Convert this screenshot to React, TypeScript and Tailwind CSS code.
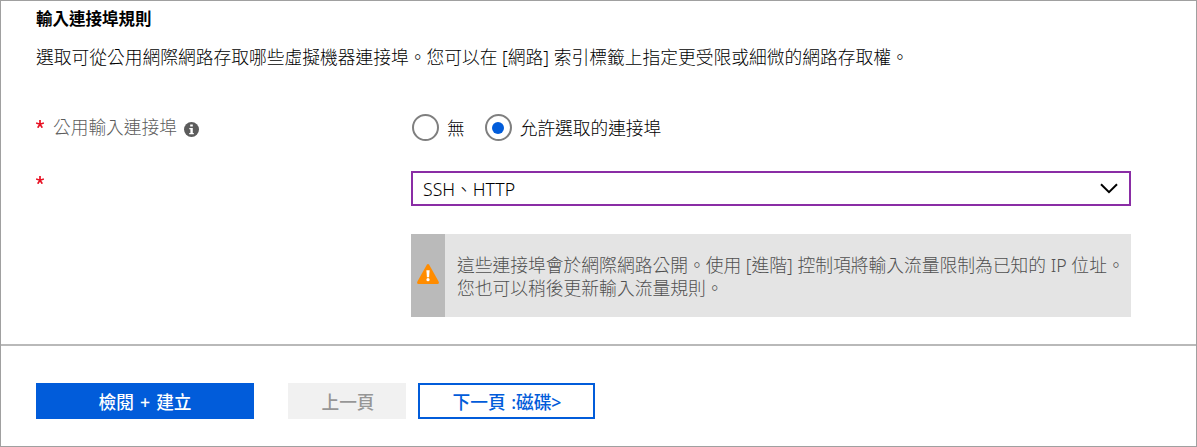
import React from "react";

function Required() {
  return (
    <svg viewBox="0 0 8 8" className="h-2 w-2 shrink-0" stroke="#e81123" strokeWidth="1.7" fill="none">
      <path d="M4 0V4.2M0.1 3L4 4.2L7.9 3M1.7 7.7L4 4.2L6.3 7.7" />
    </svg>
  );
}

function Radio({ label, checked = false }: { label: string; checked?: boolean }) {
  return (
    <div className="flex items-center gap-2">
      <span className="flex size-[27px] items-center justify-center rounded-full border-2 border-[#7f7f7f]">
        {checked && <span className="size-3 rounded-full bg-[#015cda]" />}
      </span>
      <span className="text-[17.7px] leading-6 text-black">{label}</span>
    </div>
  );
}

function InfoIcon() {
  return (
    <svg viewBox="0 0 15 15" className="size-[15px] shrink-0">
      <circle cx="7.5" cy="7.5" r="7.5" fill="#5c5c5c" />
      <path d="M6.2 2.5h2.6v2H6.2zM5.3 6h3.5v5h1v1.2H5.2V11h1.2V7.2H5.3z" fill="#fff" />
    </svg>
  );
}

function WarningIcon() {
  return (
    <svg viewBox="0 0 22 20" className="h-5 w-[22px]">
      <path d="M9.8 0.7Q11 -0.6 12.2 0.7L21.7 17.7Q22.4 19.9 20.5 20H1.5Q-0.4 19.9 0.3 17.7Z" fill="#ff8c00" />
      <path d="M9.4 6.2h3.2l-.5 7.1h-2.2z" fill="#fff" />
      <circle cx="11" cy="15.7" r="1.6" fill="#fff" />
    </svg>
  );
}

export default function App() {
  return (
    <div
      lang="zh-Hant"
      className="flex h-[447px] w-[1197px] flex-col overflow-hidden border border-[#a0a0a0] bg-white font-['Noto_Sans','Noto_Sans_CJK_TC',sans-serif] font-light whitespace-nowrap"
    >
      <main className="flex h-[343px] flex-col pl-[35px]">
        <h2 className="mt-1.5 text-[16.5px] leading-6 font-bold text-black">輸入連接埠規則</h2>
        <p className="mt-3.5 text-[17.75px] leading-6 text-black">
          選取可從公用網際網路存取哪些虛擬機器連接埠。您可以在 [網路] 索引標籤上指定更受限或細微的網路存取權。
        </p>
        <div className="mt-[45px] flex h-[27px] items-center">
          <div className="flex w-[376px] items-center">
            <div className="-mt-2"><Required /></div>
            <span className="-mt-px ml-[9px] text-[17.7px] leading-6 text-[#5c5c5c]">公用輸入連接埠</span>
            <div className="mt-[3px] ml-[7px]"><InfoIcon /></div>
          </div>
          <div className="flex gap-5">
            <Radio label="無" />
            <Radio label="允許選取的連接埠" checked />
          </div>
        </div>
        <div className="mt-[30px] flex h-[35px]">
          <div className="w-[375px] pt-[5px]"><Required /></div>
          <div className="flex w-[720px] items-center justify-between border-2 border-[#8a2da5] pr-[11px] pl-2.5 text-[17.7px] text-black">
            <span className="pt-0.5">SSH、HTTP</span>
            <svg viewBox="0 0 18 11" className="h-[11px] w-[18px]" fill="none" stroke="#000" strokeWidth="2">
              <path d="M1 1.2L9 9.2L17 1.2" />
            </svg>
          </div>
        </div>
        <div className="mt-7 ml-[375px] flex h-[83px] w-[720px] bg-[#e4e4e4]">
          <div className="flex w-[34px] items-center justify-center bg-[#bababa] pb-1">
            <WarningIcon />
          </div>
          <p className="pt-5 pl-3 text-[17.77px] leading-[23px] text-[#505050]">
            這些連接埠會於網際網路公開。使用 [進階] 控制項將輸入流量限制為已知的 IP 位址。
            <br />
            您也可以稍後更新輸入流量規則。
          </p>
        </div>
      </main>
      <footer className="flex flex-1 border-t-2 border-[#b9b9b9] pt-[37px] pl-[35px] text-[17.7px] font-medium">
        <button className="h-9 w-[218px] bg-[#015cda] pt-0.5 text-white [word-spacing:1.5px]">檢閱 + 建立</button>
        <button className="ml-[34px] h-9 w-[118px] bg-[#f1f1f1] pt-0.5 pl-0.5 text-[#969696]" disabled>上一頁</button>
        <button className="ml-3 h-9 w-[177px] border-2 border-[#015cda] bg-white pt-0.5 pl-px text-[#015cda] [word-spacing:1px]">下一頁 :磁碟&gt;</button>
      </footer>
    </div>
  );
}
